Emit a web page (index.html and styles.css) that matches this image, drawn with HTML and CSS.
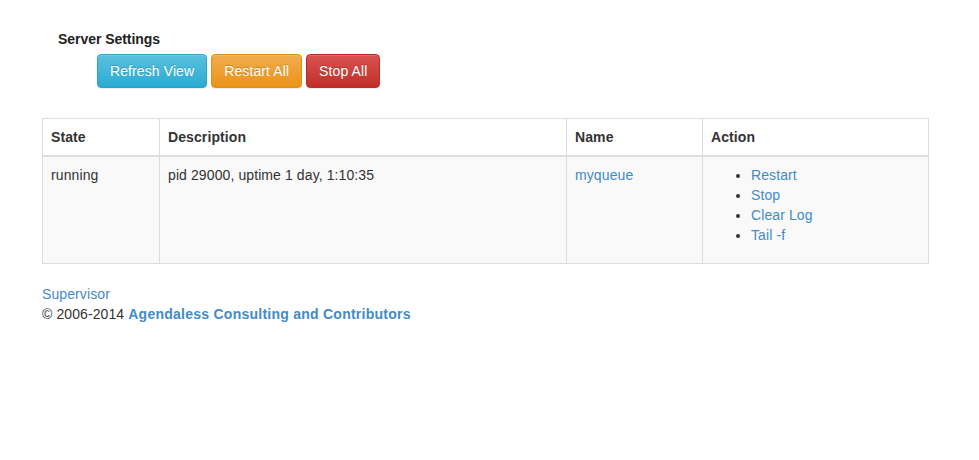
FILE: index.html
```html
<!DOCTYPE html>
<html>
<head>
<meta charset="utf-8">
<title>Supervisor Status</title>
<link rel="stylesheet" href="styles.css">
</head>
<body>
<div class="page">
  <div class="settings">
    <div class="settings-title">Server Settings</div>
    <div class="buttons">
      <a class="btn btn-info" href="#">Refresh View</a>
      <a class="btn btn-warning" href="#">Restart All</a>
      <a class="btn btn-danger" href="#">Stop All</a>
    </div>
  </div>
  <table class="status">
    <thead>
      <tr>
        <th class="c-state">State</th>
        <th class="c-desc">Description</th>
        <th class="c-name">Name</th>
        <th class="c-action">Action</th>
      </tr>
    </thead>
    <tbody>
      <tr>
        <td>running</td>
        <td>pid 29000, uptime 1 day, 1:10:35</td>
        <td><a href="#">myqueue</a></td>
        <td>
          <ul class="actions">
            <li><a href="#">Restart</a></li>
            <li><a href="#">Stop</a></li>
            <li><a href="#">Clear Log</a></li>
            <li><a href="#">Tail -f</a></li>
          </ul>
        </td>
      </tr>
    </tbody>
  </table>
  <div class="footer">
    <a href="#">Supervisor</a><br>
    © 2006-2014 <a class="strong" href="#">Agendaless Consulting and Contributors</a>
  </div>
</div>
</body>
</html>
```
FILE: styles.css
```css
html, body {
  margin: 0;
  padding: 0;
  background: #fff;
}
body {
  font-family: "Liberation Sans", Arial, sans-serif;
  font-size: 14px;
  line-height: 20px;
  color: #333;
  letter-spacing: 0.1px;
}
a {
  color: #428bca;
  text-decoration: none;
}
.page {
  padding: 29px 50px 0 42px;
}
.settings-title {
  font-weight: bold;
  margin-left: 16px;
  height: 20px;
  letter-spacing: -0.05px;
  color: #222;
}
.buttons {
  margin-left: 55px;
  margin-top: 5px;
  display: flex;
  gap: 4px;
}
.btn {
  display: inline-block;
  padding: 6px 12px;
  font-size: 14px;
  line-height: 20px;
  border: 1px solid transparent;
  border-radius: 4px;
  color: #fff;
  text-shadow: 0 -1px 0 rgba(0,0,0,0.2);
  box-shadow: inset 0 1px 0 rgba(255,255,255,0.15), 0 1px 1px rgba(0,0,0,0.075);
}
.btn-info {
  background: linear-gradient(#5bc0de, #2aabd2);
  border-color: #28a4c9;
}
.btn-warning {
  background: linear-gradient(#f0ad4e, #eb9316);
  border-color: #e38d13;
}
.btn-danger {
  background: linear-gradient(#d9534f, #c12e2a);
  border-color: #b92c28;
}
.status {
  margin-top: 30px;
  width: 887px;
  border-collapse: collapse;
  border: 1px solid #ddd;
}
.status th, .status td {
  padding: 8px;
  text-align: left;
  vertical-align: top;
  border: 1px solid #ddd;
}
.status th {
  border-bottom: 2px solid #ddd;
}
.status tbody tr {
  background: #f9f9f9;
}
.c-state { width: 100px; }
.c-desc { width: 390px; }
.c-name { width: 119px; }
.c-action { width: 209px; }
.actions {
  margin: 0 0 10px;
  padding-left: 40px;
}
.footer {
  margin-top: 20px;
}
.footer .strong {
  font-weight: bold;
  letter-spacing: 0.25px;
}
```
